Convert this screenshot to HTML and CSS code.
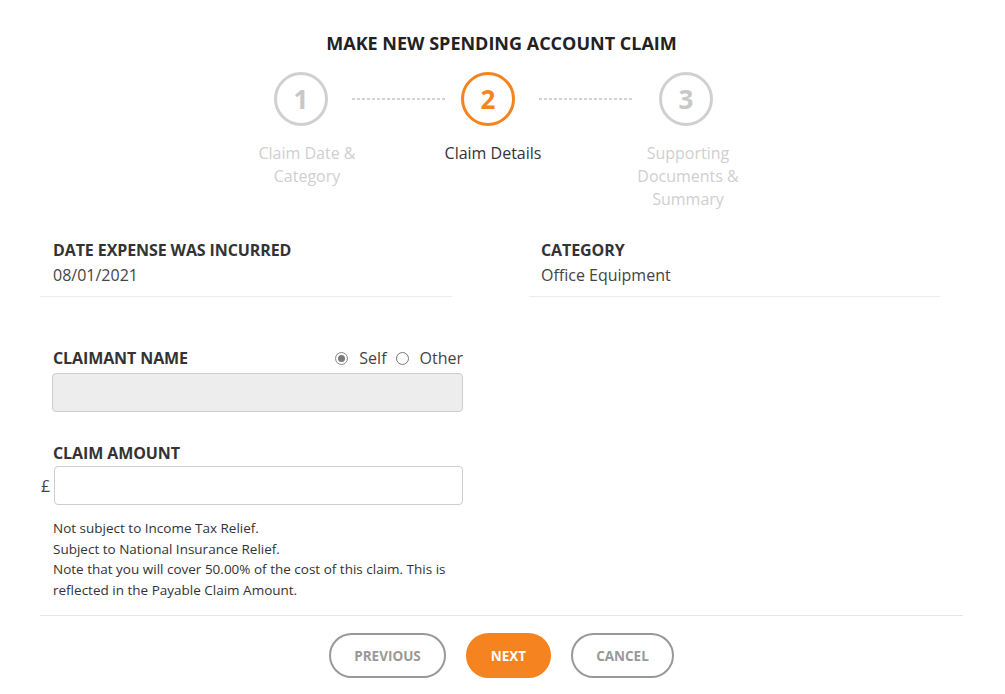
FILE: index.html
```html
<!DOCTYPE html>
<html>
<head>
<meta charset="utf-8">
<link rel="stylesheet" href="styles.css">
</head>
<body>
<div class="page">
  <h1 class="title">MAKE NEW SPENDING ACCOUNT CLAIM</h1>
  <div class="stepper">
    <div class="step step-1">
      <div class="circle">1</div>
      <div class="step-label">Claim Date &amp;<br>Category</div>
    </div>
    <div class="connector c1"></div>
    <div class="step step-2 active">
      <div class="circle">2</div>
      <div class="step-label">Claim Details</div>
    </div>
    <div class="connector c2"></div>
    <div class="step step-3">
      <div class="circle">3</div>
      <div class="step-label">Supporting<br>Documents &amp;<br>Summary</div>
    </div>
  </div>

  <div class="fields">
    <div class="field">
      <div class="field-label">DATE EXPENSE WAS INCURRED</div>
      <div class="field-value">08/01/2021</div>
    </div>
    <div class="field">
      <div class="field-label">CATEGORY</div>
      <div class="field-value">Office Equipment</div>
    </div>
  </div>

  <div class="form">
    <div class="form-head">
      <div class="field-label">CLAIMANT NAME</div>
      <div class="radios">
        <span class="radio checked"></span><span class="radio-text">Self</span>
        <span class="radio"></span><span class="radio-text">Other</span>
      </div>
    </div>
    <div class="input disabled"></div>

    <div class="field-label amount-label">CLAIM AMOUNT</div>
    <div class="amount-row">
      <span class="currency">£</span>
      <div class="input"></div>
    </div>
    <div class="notes">
      Not subject to Income Tax Relief.<br>
      Subject to National Insurance Relief.<br>
      Note that you will cover 50.00% of the cost of this claim. This is reflected in the Payable Claim Amount.
    </div>
  </div>

  <div class="footer">
    <button class="btn">PREVIOUS</button>
    <button class="btn primary">NEXT</button>
    <button class="btn">CANCEL</button>
  </div>
</div>
</body>
</html>
```

FILE: styles.css
```css
* { box-sizing: border-box; }
html, body { margin: 0; padding: 0; background: #fff; }
body {
  font-family: "Open Sans", "Liberation Sans", sans-serif;
  color: #333;
}
.page {
  width: 923px;
  margin-left: 40px;
  padding-top: 32px;
}
.title {
  margin: 0;
  font-size: 18px;
  line-height: 22px;
  font-weight: 700;
  text-align: center;
  color: #222;
}
.stepper {
  display: flex;
  align-items: flex-start;
  margin-top: 18px;
  margin-left: 206px;
}
.step {
  width: 110px;
  display: flex;
  flex-direction: column;
  align-items: center;
}
.circle {
  width: 54px;
  height: 54px;
  border-radius: 50%;
  border: 3px solid #d0d0d0;
  color: #c8c8c8;
  font-size: 26px;
  font-weight: 700;
  display: flex;
  align-items: center;
  justify-content: center;
  line-height: 1;
}
.active .circle {
  border-color: #f5831f;
  color: #f5831f;
}
.step-label {
  margin-top: 16px;
  font-size: 16px;
  line-height: 23px;
  text-align: center;
  color: #cfcfcf;
  white-space: nowrap;
}
.active .step-label { color: #333; }
.step-1 .step-label { padding-left: 12px; }
.step-2 .step-label { padding-left: 10px; }
.step-3 .step-label { padding-left: 4px; }
.connector {
  height: 2px;
  width: 93px;
  margin-top: 26px;
  background: repeating-linear-gradient(to right, #d3d3d3 0 3px, transparent 3px 5px);
}
.c1 { margin-left: -4px; margin-right: -12px; }
.c2 { margin-left: -4px; margin-right: -1px; }

.fields {
  display: grid;
  grid-template-columns: 412px 411px;
  column-gap: 77px;
  margin-top: 28px;
}
.field {
  padding: 0 12px 10px 13px;
  border-bottom: 1px solid #ececec;
}
.field + .field { padding-left: 12px; }
.field-label {
  font-size: 16px;
  line-height: 22px;
  font-weight: 700;
  color: #333;
  letter-spacing: -0.1px;
}
.field-value {
  margin-top: 3px;
  font-size: 16px;
  line-height: 22px;
  color: #444;
}
.form {
  width: 423px;
  padding-left: 12px;
  margin-top: 50px;
}
.form .field-label { padding-left: 1px; }
.form-head {
  display: flex;
  justify-content: space-between;
  align-items: center;
}
.radios {
  display: flex;
  align-items: center;
  font-size: 16px;
  color: #444;
}
.radio {
  width: 13px;
  height: 13px;
  border-radius: 50%;
  border: 1px solid #777;
  margin-right: 11px;
  position: relative;
  background: #fff;
}
.radio.checked {
  border-color: #888;
}
.radio.checked::after {
  content: "";
  position: absolute;
  left: 2px; top: 2px;
  width: 7px; height: 7px;
  border-radius: 50%;
  background: #7a7a7a;
}
.radio-text { margin-right: 9px; }
.radio-text:last-child { margin-right: 0; }
.input {
  height: 39px;
  border: 1px solid #cdcdcd;
  border-radius: 4px;
  background: #fff;
}
.input.disabled {
  margin-top: 4px;
  background: #ededed;
}
.amount-label { margin-top: 30px; }
.amount-row {
  display: flex;
  align-items: center;
  margin-top: 2px;
  margin-left: -11px;
}
.currency {
  font-size: 16px;
  color: #444;
  width: 13px;
}
.amount-row .input { flex: 1; }
.notes {
  margin-top: 13px;
  padding-left: 1px;
  font-size: 13.5px;
  line-height: 20.5px;
  color: #333;
  width: 410px;
}
.footer {
  margin-top: 15px;
  border-top: 1px solid #e6e6e6;
  display: flex;
  justify-content: center;
  gap: 20px;
  padding-top: 17px;
}
.btn {
  height: 45px;
  border-radius: 23px;
  border: 2px solid #999;
  background: #fff;
  color: #999;
  font-family: "Open Sans", "Liberation Sans", sans-serif;
  font-weight: 700;
  font-size: 13.5px;
  padding: 0 23px;
  cursor: pointer;
}
.btn.primary {
  background: #f5831f;
  border-color: #f5831f;
  color: #fff;
}
```
